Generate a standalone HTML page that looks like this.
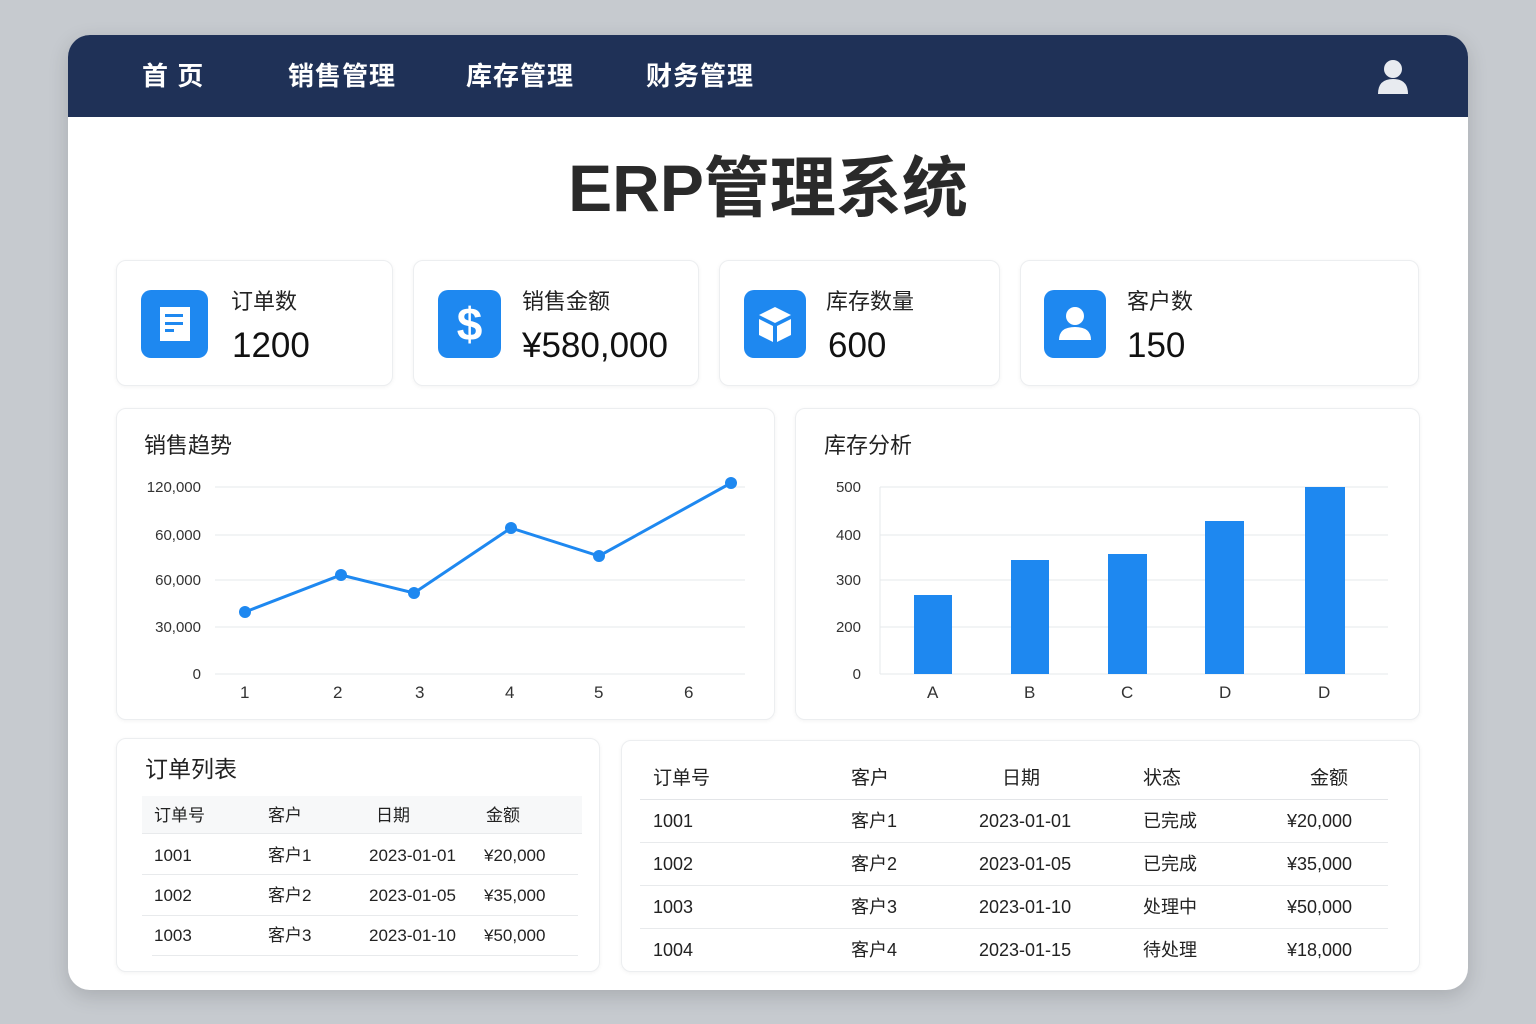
<!DOCTYPE html>
<html><head><meta charset="utf-8"><style>
*{margin:0;padding:0;box-sizing:border-box}
body{width:1536px;height:1024px;background:#c6cacf;font-family:"Liberation Sans","Noto Sans CJK SC",sans-serif;position:relative;overflow:hidden;color:#222}
.main{position:absolute;left:68px;top:35px;width:1400px;height:955px;background:#fff;border-radius:22px;overflow:hidden;box-shadow:0 6px 20px rgba(0,0,0,.15)}
.nav{position:absolute;left:0;top:0;width:1400px;height:82px;background:#1f3157}
.nav span{position:absolute;top:24px;line-height:34px;color:#fff;font-size:26px;font-weight:bold;letter-spacing:1px}
.abs{position:absolute}
.card{position:absolute;background:#fff;border:1px solid #eceef0;border-radius:10px;box-shadow:0 1px 4px rgba(0,0,0,.05)}
.ic{position:absolute;left:24px;top:29px;width:67px;height:68px;background:#1e88f0;border-radius:10px}
.lab{position:absolute;font-size:22px;line-height:30px;color:#222}
.val{position:absolute;font-size:35px;line-height:40px;color:#111}
.t{position:absolute;font-size:17px;line-height:22px;color:#222;white-space:nowrap}
.ax{position:absolute;font-size:15px;line-height:18px;color:#333}
</style></head><body>
<div class="main">
 <div class="nav">
  <span style="left:74px">首 页</span><span style="left:220px">销售管理</span><span style="left:398px">库存管理</span><span style="left:578px">财务管理</span>
  <svg class="abs" style="left:1309px;top:24px" width="32" height="36" viewBox="0 0 32 36"><circle cx="16" cy="10" r="9" fill="#e8ebf0"/><path d="M1 35 Q1 20 16 20 Q31 20 31 35Z" fill="#e8ebf0"/></svg>
 </div>
 <div class="abs" style="left:0;width:1400px;top:115px;line-height:76px;text-align:center;font-size:66px;font-weight:bold;color:#2a2a2a">ERP管理系统</div>
</div>
<div class="card" style="left:116px;top:260px;width:277px;height:126px">
 <div class="ic"><svg width="67" height="68"><rect x="19" y="17" width="30" height="34" fill="#fff"/><rect x="24" y="24" width="18" height="3" fill="#1e88f0"/><rect x="24" y="32" width="18" height="3" fill="#1e88f0"/><rect x="24" y="39" width="9" height="3" fill="#1e88f0"/></svg></div>
 <div class="lab" style="left:114px;top:26px">订单数</div><div class="val" style="left:115px;top:65px">1200</div></div>
<div class="card" style="left:413px;top:260px;width:286px;height:126px">
 <div class="ic" style="left:24px;width:63px"><div style="color:#fff;font-size:46px;font-weight:bold;text-align:center;line-height:68px">$</div></div>
 <div class="lab" style="left:108px;top:26px">销售金额</div><div class="val" style="left:108px;top:65px">¥580,000</div></div>
<div class="card" style="left:719px;top:260px;width:281px;height:126px">
 <div class="ic" style="left:24px;width:62px"><svg width="62" height="68" viewBox="0 0 62 68"><path d="M31 17 L47 25 L31 33 L15 25Z M15 29 L29 36 L29 52 L15 45Z M33 36 L47 29 L47 45 L33 52Z" fill="#fff"/></svg></div>
 <div class="lab" style="left:106px;top:26px">库存数量</div><div class="val" style="left:108px;top:65px">600</div></div>
<div class="card" style="left:1020px;top:260px;width:399px;height:126px">
 <div class="ic" style="left:23px;width:62px"><svg width="62" height="68"><circle cx="31" cy="26" r="9" fill="#fff"/><path d="M15 50 Q15 37 31 37 Q47 37 47 50Z" fill="#fff"/></svg></div>
 <div class="lab" style="left:106px;top:26px">客户数</div><div class="val" style="left:106px;top:65px">150</div></div>
<div class="card" style="left:116px;top:408px;width:659px;height:312px"></div>
<div class="card" style="left:795px;top:408px;width:625px;height:312px"></div>
<div class="t" style="left:144px;top:431px;font-size:22px;line-height:30px">销售趋势</div>
<div class="t" style="left:824px;top:431px;font-size:22px;line-height:30px">库存分析</div>
<svg class="abs" style="left:0;top:0" width="1536" height="1024">
 <g stroke="#e6e8eb" stroke-width="1">
  <line x1="215" y1="487" x2="745" y2="487"/><line x1="215" y1="535" x2="745" y2="535"/><line x1="215" y1="580" x2="745" y2="580"/><line x1="215" y1="627" x2="745" y2="627"/><line x1="215" y1="674" x2="745" y2="674"/>
  <line x1="880" y1="487" x2="1388" y2="487"/><line x1="880" y1="535" x2="1388" y2="535"/><line x1="880" y1="580" x2="1388" y2="580"/><line x1="880" y1="627" x2="1388" y2="627"/><line x1="880" y1="674" x2="1388" y2="674"/><line x1="880" y1="487" x2="880" y2="674"/>
 </g>
 <polyline points="245,612 341,575 414,593 511,528 599,556 731,483" fill="none" stroke="#1e88f0" stroke-width="3"/>
 <g fill="#1e88f0"><circle cx="245" cy="612" r="6"/><circle cx="341" cy="575" r="6"/><circle cx="414" cy="593" r="6"/><circle cx="511" cy="528" r="6"/><circle cx="599" cy="556" r="6"/><circle cx="731" cy="483" r="6"/>
 <rect x="914" y="595" width="38" height="79"/><rect x="1011" y="560" width="38" height="114"/><rect x="1108" y="554" width="39" height="120"/><rect x="1205" y="521" width="39" height="153"/><rect x="1305" y="487" width="40" height="187"/></g>
</svg>
<div class="ax" style="left:140px;top:479px;width:61px;text-align:right">120,000</div>
<div class="ax" style="left:140px;top:527px;width:61px;text-align:right">60,000</div>
<div class="ax" style="left:140px;top:572px;width:61px;text-align:right">60,000</div>
<div class="ax" style="left:140px;top:619px;width:61px;text-align:right">30,000</div>
<div class="ax" style="left:140px;top:666px;width:61px;text-align:right">0</div>
<div class="ax" style="left:240px;top:684px;font-size:17px">1</div><div class="ax" style="left:333px;top:684px;font-size:17px">2</div><div class="ax" style="left:415px;top:684px;font-size:17px">3</div><div class="ax" style="left:505px;top:684px;font-size:17px">4</div><div class="ax" style="left:594px;top:684px;font-size:17px">5</div><div class="ax" style="left:684px;top:684px;font-size:17px">6</div>
<div class="ax" style="left:820px;top:479px;width:41px;text-align:right">500</div>
<div class="ax" style="left:820px;top:527px;width:41px;text-align:right">400</div>
<div class="ax" style="left:820px;top:572px;width:41px;text-align:right">300</div>
<div class="ax" style="left:820px;top:619px;width:41px;text-align:right">200</div>
<div class="ax" style="left:820px;top:666px;width:41px;text-align:right">0</div>
<div class="ax" style="left:927px;top:684px;font-size:17px">A</div><div class="ax" style="left:1024px;top:684px;font-size:17px">B</div><div class="ax" style="left:1121px;top:684px;font-size:17px">C</div><div class="ax" style="left:1219px;top:684px;font-size:17px">D</div><div class="ax" style="left:1318px;top:684px;font-size:17px">D</div>
<div class="card" style="left:116px;top:738px;width:484px;height:234px"></div>
<div class="t" style="left:145px;top:754px;font-size:23px;line-height:30px">订单列表</div>
<div class="abs" style="left:142px;top:796px;width:440px;height:38px;background:#f7f8f9;border-bottom:1px solid #e8eaec"></div>
<div class="abs" style="left:142px;top:874px;width:436px;height:1px;background:#e8eaec"></div>
<div class="abs" style="left:142px;top:915px;width:436px;height:1px;background:#e8eaec"></div>
<div class="abs" style="left:152px;top:955px;width:426px;height:1px;background:#e8eaec"></div>
<div class="t" style="left:154px;top:805px">订单号</div><div class="t" style="left:268px;top:805px">客户</div><div class="t" style="left:376px;top:805px">日期</div><div class="t" style="left:486px;top:805px">金额</div>
<div class="t" style="left:154px;top:845px">1001</div><div class="t" style="left:268px;top:845px">客户1</div><div class="t" style="left:369px;top:845px">2023-01-01</div><div class="t" style="left:484px;top:845px">¥20,000</div>
<div class="t" style="left:154px;top:885px">1002</div><div class="t" style="left:268px;top:885px">客户2</div><div class="t" style="left:369px;top:885px">2023-01-05</div><div class="t" style="left:484px;top:885px">¥35,000</div>
<div class="t" style="left:154px;top:925px">1003</div><div class="t" style="left:268px;top:925px">客户3</div><div class="t" style="left:369px;top:925px">2023-01-10</div><div class="t" style="left:484px;top:925px">¥50,000</div>
<div class="card" style="left:621px;top:740px;width:799px;height:232px"></div>
<div class="abs" style="left:640px;top:799px;width:748px;height:1px;background:#e3e5e8"></div>
<div class="abs" style="left:640px;top:842px;width:748px;height:1px;background:#e8eaec"></div>
<div class="abs" style="left:640px;top:885px;width:748px;height:1px;background:#e8eaec"></div>
<div class="abs" style="left:640px;top:928px;width:748px;height:1px;background:#e8eaec"></div>
<div class="t" style="left:653px;top:767px;font-size:19px;line-height:24px">订单号</div><div class="t" style="left:851px;top:767px;font-size:19px;line-height:24px">客户</div><div class="t" style="left:1002px;top:767px;font-size:19px;line-height:24px">日期</div><div class="t" style="left:1143px;top:767px;font-size:19px;line-height:24px">状态</div><div class="t" style="left:1310px;top:767px;font-size:19px;line-height:24px">金额</div>
<div class="t" style="left:653px;top:810px;font-size:18px">1001</div><div class="t" style="left:851px;top:810px;font-size:18px">客户1</div><div class="t" style="left:979px;top:810px;font-size:18px">2023-01-01</div><div class="t" style="left:1143px;top:810px;font-size:18px">已完成</div><div class="t" style="left:1287px;top:810px;font-size:18px">¥20,000</div>
<div class="t" style="left:653px;top:853px;font-size:18px">1002</div><div class="t" style="left:851px;top:853px;font-size:18px">客户2</div><div class="t" style="left:979px;top:853px;font-size:18px">2023-01-05</div><div class="t" style="left:1143px;top:853px;font-size:18px">已完成</div><div class="t" style="left:1287px;top:853px;font-size:18px">¥35,000</div>
<div class="t" style="left:653px;top:896px;font-size:18px">1003</div><div class="t" style="left:851px;top:896px;font-size:18px">客户3</div><div class="t" style="left:979px;top:896px;font-size:18px">2023-01-10</div><div class="t" style="left:1143px;top:896px;font-size:18px">处理中</div><div class="t" style="left:1287px;top:896px;font-size:18px">¥50,000</div>
<div class="t" style="left:653px;top:939px;font-size:18px">1004</div><div class="t" style="left:851px;top:939px;font-size:18px">客户4</div><div class="t" style="left:979px;top:939px;font-size:18px">2023-01-15</div><div class="t" style="left:1143px;top:939px;font-size:18px">待处理</div><div class="t" style="left:1287px;top:939px;font-size:18px">¥18,000</div>
</body></html>
